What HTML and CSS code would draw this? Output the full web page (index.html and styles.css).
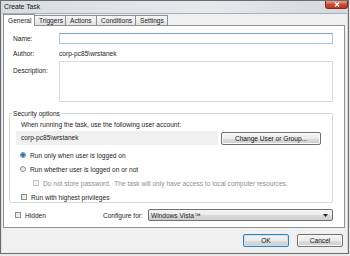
FILE: index.html
```html
<!DOCTYPE html>
<html lang="en">
<head>
  <meta charset="UTF-8" />
  <title>Create Task</title>
  <link rel="stylesheet" href="styles.css">
</head>
<body>

  <div class="window">
    <div class="titlebar">
      <span class="title">Create Task</span>
      <span class="close">
        <svg width="8" height="5" viewBox="0 0 8 5"><path d="M2 0.5 L6 4.5 M6 0.5 L2 4.5" stroke="#fff" stroke-width="1.2"/></svg>
      </span>
    </div>

    <div class="client">
      <div class="tabs">
        <div class="tab active">General</div>
        <div class="tab">Triggers</div>
        <div class="tab">Actions</div>
        <div class="tab">Conditions</div>
        <div class="tab">Settings</div>
      </div>

      <div class="panel">
        <div class="row name-row">
          <span class="label">Name:</span>
          <div class="input"></div>
        </div>
        <div class="row author-row">
          <span class="label">Author:</span>
          <span>corp-pc85\wrstanek</span>
        </div>
        <div class="row desc-row">
          <span class="label">Description:</span>
          <div class="textarea"></div>
        </div>

        <div class="group">
          <span class="legend">Security options</span>
          <p class="hint">When running the task, use the following user account:</p>
          <div class="account-row">
            <div class="account">corp-pc85\wrstanek</div>
            <button class="btn change">Change User or Group...</button>
          </div>
          <div class="option"><span class="radio checked"></span>Run only when user is logged on</div>
          <div class="option"><span class="radio"></span>Run whether user is logged on or not</div>
          <div class="option sub disabled"><span class="check"></span>Do not store password.&nbsp; The task will only have access to local computer resources.</div>
          <div class="option"><span class="check"></span>Run with highest privileges</div>
        </div>

        <div class="bottom-row">
          <div class="option hidden-opt"><span class="check"></span>Hidden</div>
          <span class="configure-label">Configure for:</span>
          <div class="select">
            <span>Windows Vista™</span>
            <svg width="5" height="3" viewBox="0 0 5 3"><path d="M0 0 H5 L2.5 3 Z" fill="#222"/></svg>
          </div>
        </div>
      </div>

      <div class="footer">
        <button class="btn ok">OK</button>
        <button class="btn">Cancel</button>
      </div>
    </div>
  </div>

</body>
</html>
```

FILE: styles.css
```css
body {
  margin: 0;
  padding: 0;
  width: 350px;
  height: 256px;
  background: #e9e9e9;
  font-family: 'Liberation Sans', Arial, sans-serif;
  font-size: 6.6px;
  color: #1e1e1e;
  overflow: hidden;
}

.window {
  width: 347px;
  height: 252px;
  border: 1px solid #6c6c6c;
  background: linear-gradient(to right, #d9dde2, #e6e9ec 60%, #d3d8de);
  display: flex;
  flex-direction: column;
}

.titlebar {
  height: 12px;
  display: flex;
  justify-content: space-between;
  align-items: flex-start;
}

.title {
  margin: 2px 0 0 3px;
  font-size: 6.8px;
  color: #111;
}

.close {
  width: 21px;
  height: 7px;
  background: linear-gradient(#e8a290, #c9462c 55%, #b83a22);
  border: 1px solid #7a2d1f;
  border-top: none;
  border-radius: 0 0 3px 3px;
  display: flex;
  align-items: center;
  justify-content: center;
}

.client {
  flex: 1;
  background: #f0f0f0;
  border-top: 1px solid #a9afb6;
  margin: 0 1px;
  display: flex;
  flex-direction: column;
}

.tabs {
  display: flex;
  align-items: flex-end;
  height: 11px;
  padding-left: 1px;
}

.tab {
  height: 9px;
  line-height: 9px;
  padding: 0 4px;
  background: linear-gradient(#f7f7f7, #e2e2e2);
  border: 1px solid #8d9198;
  border-bottom: none;
  margin-right: -1px;
}

.tab:nth-child(1) { width: 22px; }
.tab:nth-child(2) { width: 22px; }
.tab:nth-child(3) { width: 22px; }
.tab:nth-child(4) { width: 30px; }
.tab:nth-child(5) { width: 23px; }

.tab.active {
  background: #fff;
  height: 11px;
  position: relative;
  z-index: 1;
  margin-bottom: -1px;
  line-height: 12px;
}

.panel {
  height: 203px;
  margin: 0 2px 0 1px;
  background: #fff;
  border: 1px solid #8d9198;
  padding: 7px 11px 0 9px;
  box-sizing: border-box;
}

.row {
  display: flex;
  align-items: center;
}

.label {
  width: 46px;
  flex: none;
}

.input {
  flex: 1;
  height: 11px;
  box-sizing: border-box;
  border: 1px solid #a9c6e2;
  border-top-color: #7fa8cf;
}

.author-row {
  height: 11px;
  margin-top: 4px;
}

.desc-row {
  align-items: flex-start;
  margin-top: 2px;
}

.desc-row .label {
  padding-top: 6px;
}

.textarea {
  flex: 1;
  height: 41px;
  box-sizing: border-box;
  border: 1px solid #d6d9dd;
}

.group {
  position: relative;
  margin: 11px 0 0 -4px;
  height: 90px;
  box-sizing: border-box;
  border: 1px solid #d5dade;
  border-radius: 2px;
  padding: 7px 0 0 11px;
}

.legend {
  position: absolute;
  top: -4px;
  left: 2px;
  background: #fff;
  padding: 0 1px;
  line-height: 8px;
}

.hint {
  margin: 0;
  line-height: 8px;
}

.account-row {
  display: flex;
  align-items: center;
  margin-top: 1px;
  margin-left: -5px;
}

.account {
  width: 202px;
  height: 14px;
  line-height: 14px;
  padding-left: 5px;
  background: #f0f0f0;
  box-sizing: border-box;
}

.btn {
  font-family: inherit;
  font-size: 6.6px;
  color: #111;
  height: 13px;
  padding: 0;
  border: 1px solid #707070;
  border-radius: 2px;
  background: linear-gradient(#f4f4f4, #ebebeb 50%, #dcdcdc 51%, #cfcfcf);
  box-shadow: inset 0 0 0 1px #fbfbfb;
}

.change {
  width: 100px;
  margin-left: 3px;
  margin-top: 2px;
}

.option {
  display: flex;
  align-items: center;
  height: 8px;
  margin-top: 6px;
}

.account-row + .option {
  margin-top: 6px;
}

.option.sub {
  padding-left: 12px;
}

.option.disabled {
  color: #8e8e8e;
}

.radio,
.check {
  width: 6px;
  height: 6px;
  box-sizing: border-box;
  border: 1px solid #8f8f8f;
  background: linear-gradient(135deg, #dedede, #fafafa);
  margin-right: 4px;
  flex: none;
}

.radio {
  border-radius: 50%;
  margin-left: -1px;
}

.radio.checked {
  background: radial-gradient(circle, #2b6fb4 0 1.5px, #d6e6f4 2px);
  border-color: #6a8fb3;
}

.option.disabled .check {
  border-color: #c4c4c4;
  background: #f4f4f4;
}

.bottom-row {
  display: flex;
  align-items: center;
  margin-top: 6px;
  height: 12px;
}

.hidden-opt {
  margin-top: 0;
  margin-left: 2px;
}

.configure-label {
  margin-left: 57px;
  width: 45px;
}

.select {
  flex: 1;
  height: 12px;
  box-sizing: border-box;
  border: 1px solid #707070;
  border-radius: 2px;
  background: linear-gradient(#f4f4f4, #ebebeb 50%, #dcdcdc 51%, #cfcfcf);
  display: flex;
  align-items: center;
  justify-content: space-between;
  padding: 0 4px 0 2px;
}

.footer {
  flex: 1;
  display: flex;
  justify-content: flex-end;
  align-items: flex-start;
  gap: 8px;
  padding: 6px 4px 0 0;
}

.footer .btn {
  width: 46px;
}

.btn.ok {
  border-color: #3c7fb1;
  box-shadow: inset 0 0 0 1px #bfe3f7;
}
```
